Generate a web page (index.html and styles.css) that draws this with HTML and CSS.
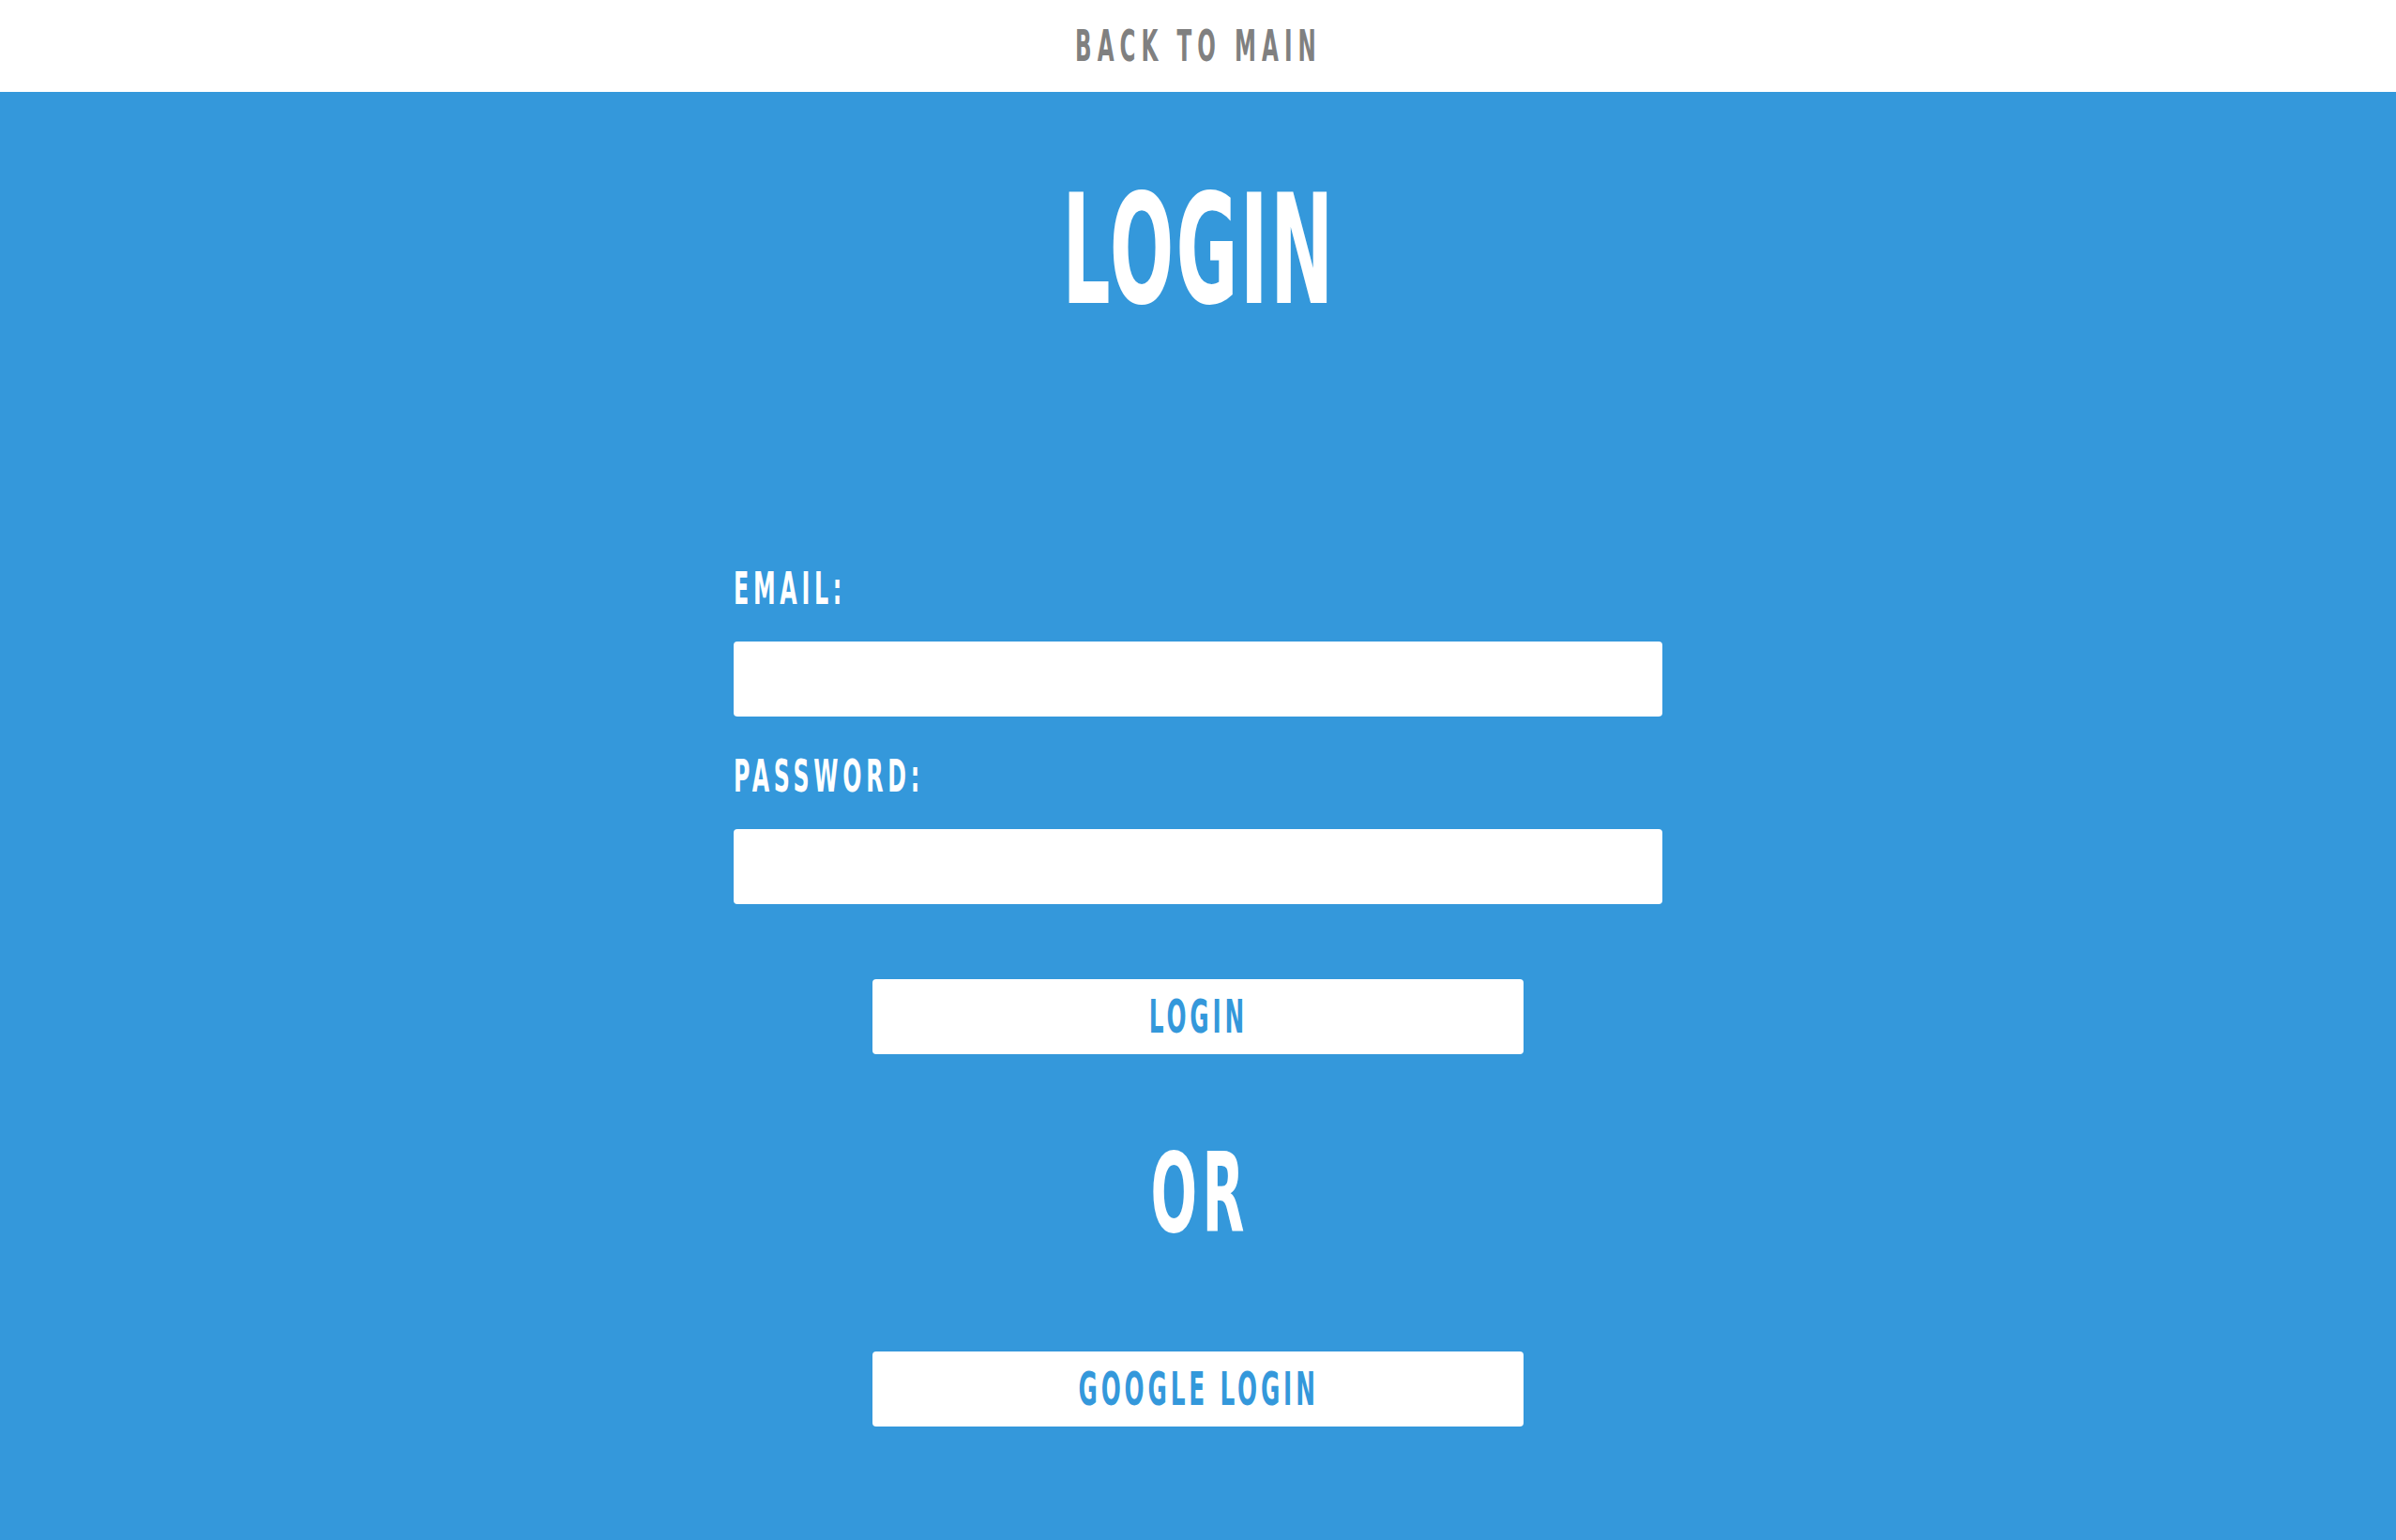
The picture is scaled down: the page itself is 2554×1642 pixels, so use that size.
FILE: index.html
```html
<!DOCTYPE html>
<html lang="en">
<head>
<meta charset="utf-8">
<title>Login</title>
<link rel="stylesheet" href="styles.css">
</head>
<body>
<header class="topbar">
  <a class="back-link" href="#"><span class="txt">BACK TO MAIN</span></a>
</header>
<main class="page">
  <h1 class="title"><span class="txt">LOGIN</span></h1>
  <form class="form" onsubmit="return false;">
    <label class="field-label" for="email"><span class="txt">EMAIL:</span></label>
    <input class="field-input" id="email" type="email">
    <label class="field-label field-label-second" for="password"><span class="txt">PASSWORD:</span></label>
    <input class="field-input" id="password" type="password">
    <button class="btn" type="submit"><span class="txt">LOGIN</span></button>
    <div class="or"><span class="txt">OR</span></div>
    <button class="btn btn-google" type="button"><span class="txt">GOOGLE LOGIN</span></button>
  </form>
</main>
</body>
</html>
```
FILE: styles.css
```css
html, body {
  margin: 0;
  padding: 0;
}
body {
  background: #3498db;
  font-family: "DejaVu Sans Condensed", "DejaVu Sans", sans-serif;
  font-stretch: condensed;
  font-weight: bold;
  min-height: 100vh;
}
.txt {
  display: inline-block;
  white-space: nowrap;
  transform: scaleX(0.55);
  transform-origin: center;
}
.topbar {
  height: 98px;
  background: #ffffff;
  display: flex;
  justify-content: center;
  align-items: center;
}
.back-link {
  font-size: 46.6px;
  line-height: 1;
  color: #808080;
  letter-spacing: 11px;
  text-decoration: none;
}
.back-link .txt {
  padding-left: 2px;
}
.title {
  margin: 87px 0 0;
  font-size: 163px;
  line-height: 1;
  font-weight: bold;
  letter-spacing: 4px;
  text-align: center;
  color: #ffffff;
}
.title .txt {
  padding-left: 4px;
}
.form {
  width: 990px;
  margin: 255px auto 0;
  display: flex;
  flex-direction: column;
}
.field-label {
  display: block;
  font-size: 48px;
  line-height: 1;
  letter-spacing: 8.6px;
  color: #ffffff;
}
.field-label .txt {
  transform-origin: left center;
}
.field-label-second {
  margin-top: 39.4px;
}
.field-input {
  display: block;
  box-sizing: border-box;
  width: 100%;
  height: 80px;
  margin-top: 32.6px;
  border: none;
  border-radius: 4px;
  background: #ffffff;
  padding: 0 16px;
  font-size: 28px;
  outline: none;
}
.btn {
  align-self: center;
  width: 694px;
  height: 80px;
  margin-top: 80px;
  border: none;
  border-radius: 4px;
  background: #ffffff;
  color: #3498db;
  font-family: inherit;
  font-stretch: inherit;
  font-weight: bold;
  font-size: 50px;
  line-height: 1;
  letter-spacing: 7px;
  padding: 0;
  display: flex;
  justify-content: center;
  align-items: center;
  cursor: pointer;
}
.btn .txt {
  padding-left: 1px;
}
.or {
  margin-top: 89.2px;
  font-size: 118px;
  line-height: 1;
  letter-spacing: 10px;
  text-align: center;
  color: #ffffff;
}
.or .txt {
  padding-left: 8px;
}
.btn-google {
  margin-top: 109.8px;
}
```
